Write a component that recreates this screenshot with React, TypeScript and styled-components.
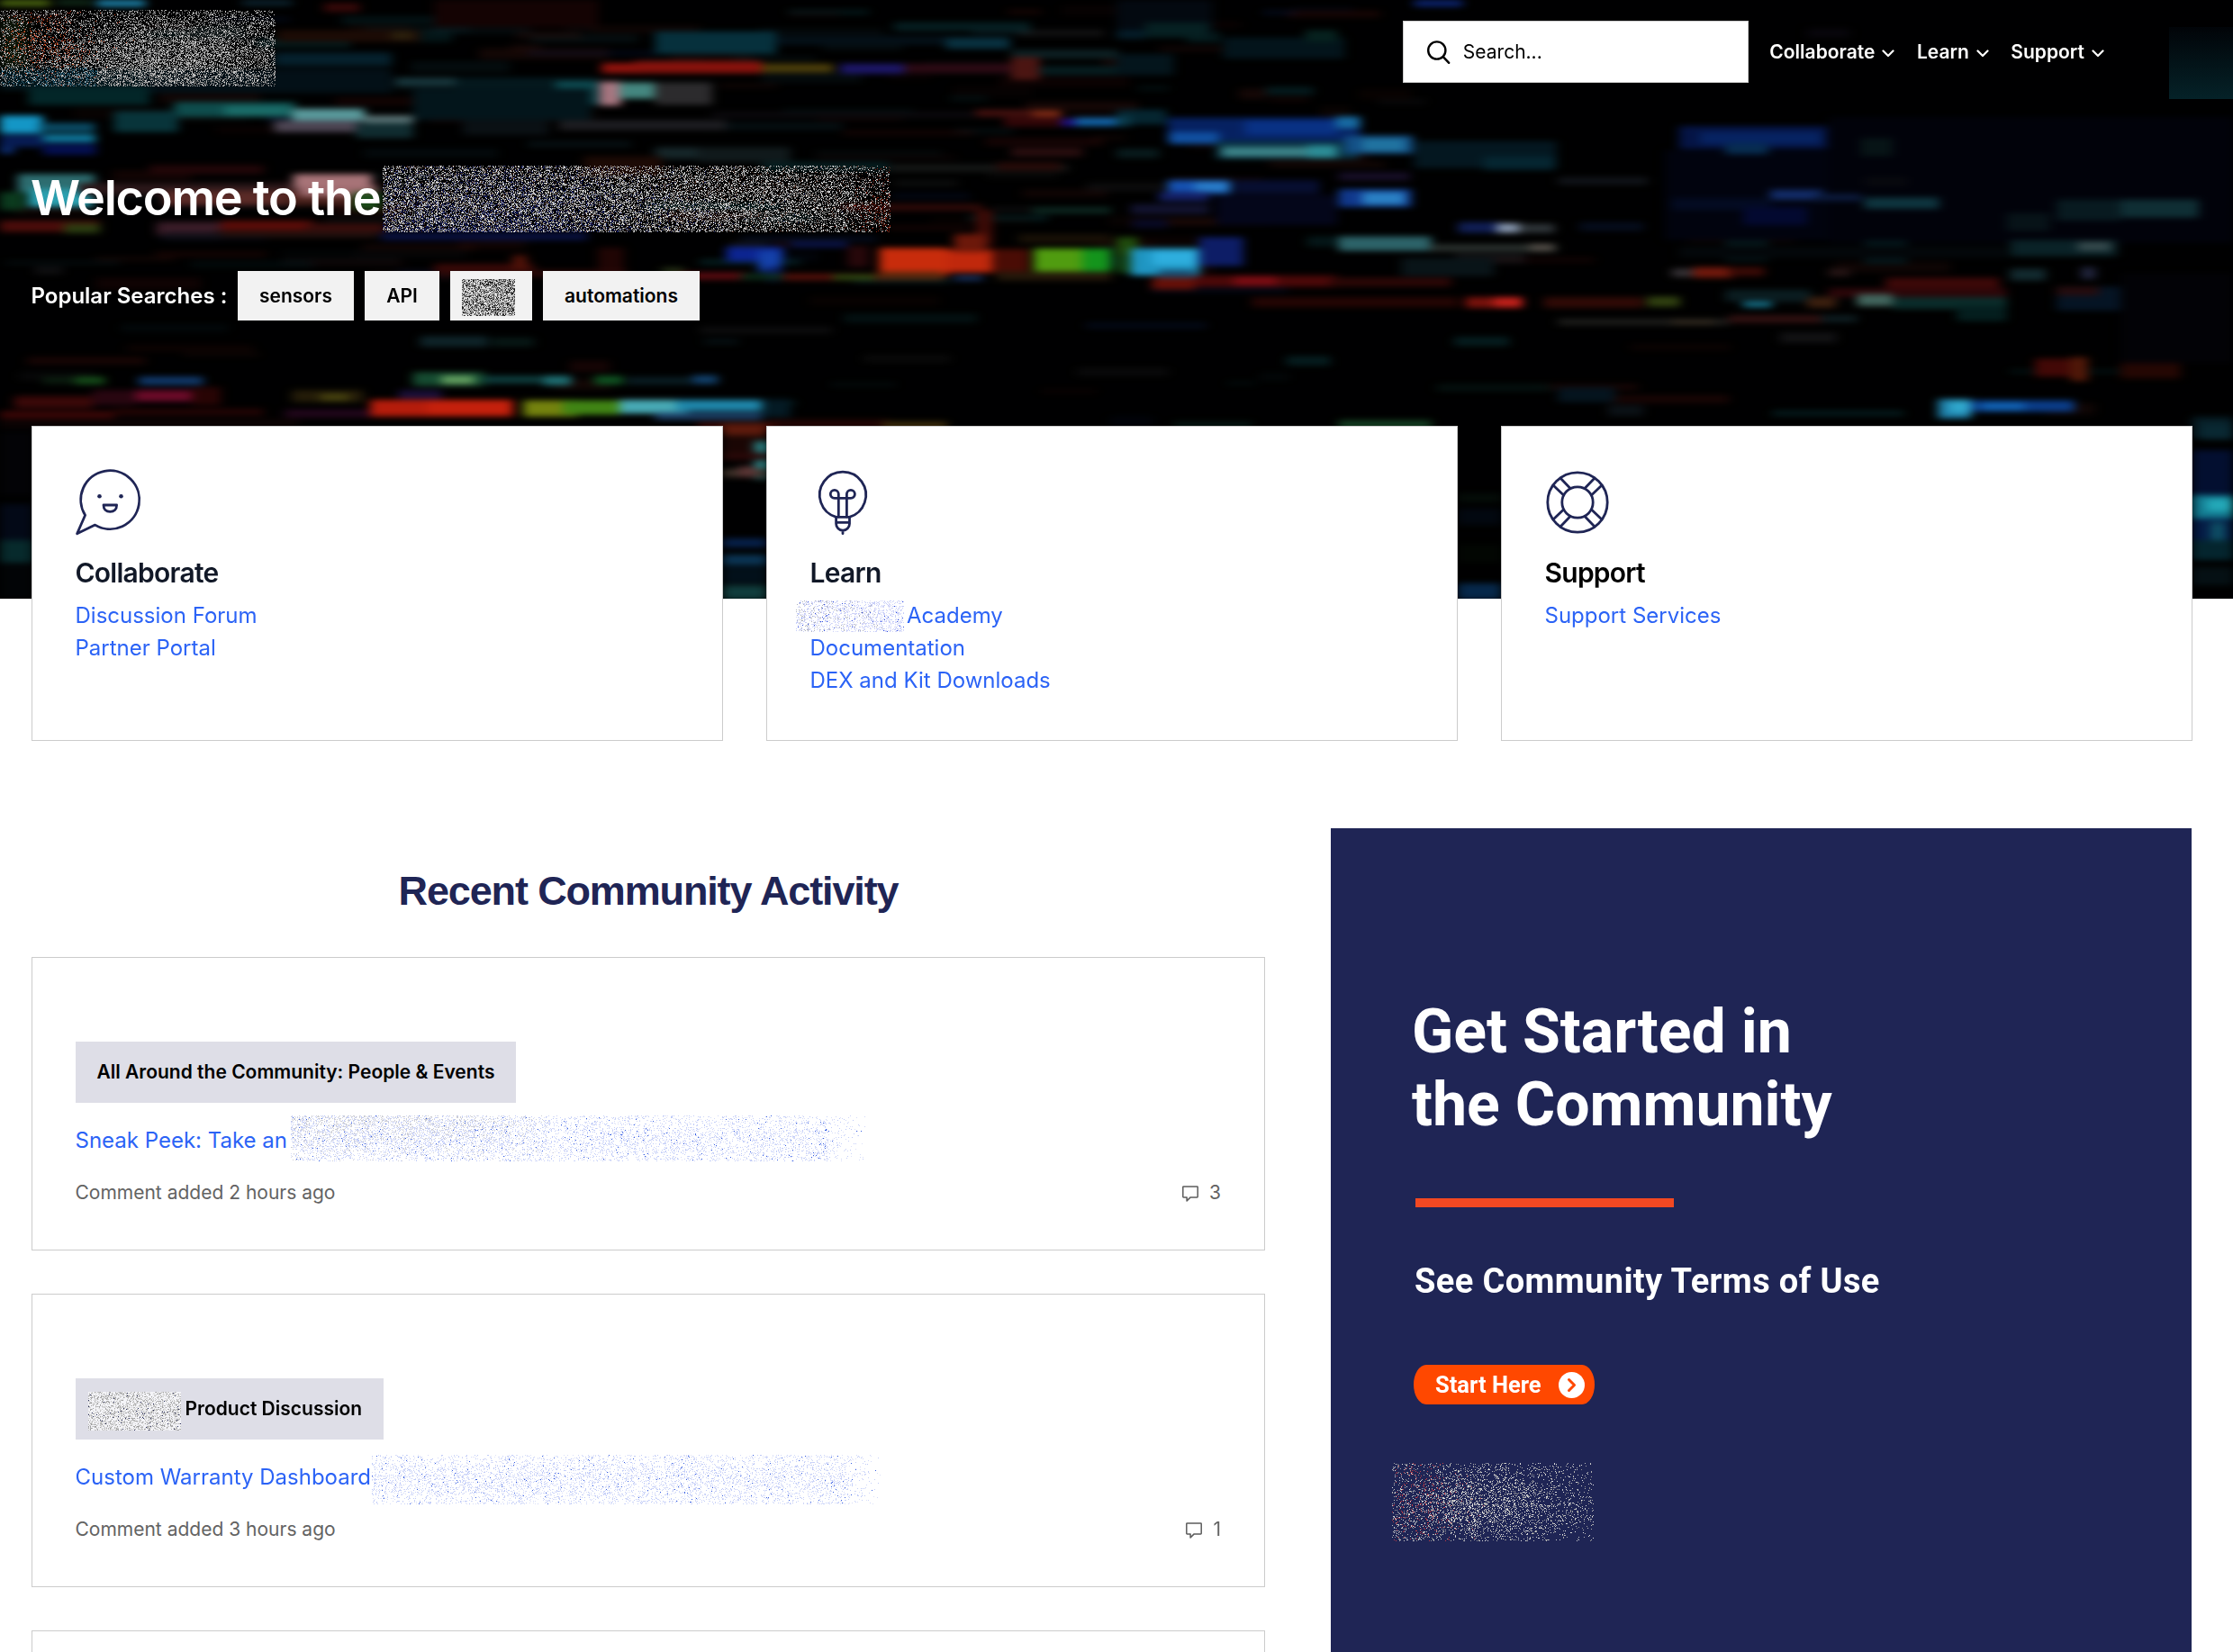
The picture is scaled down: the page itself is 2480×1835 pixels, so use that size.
import React, { useLayoutEffect, useRef } from "react";
import styled, { createGlobalStyle } from "styled-components";

const NAVY = "#1f2555";
const LINK = "#2b63f6";

const GlobalStyle = createGlobalStyle`
  * { box-sizing: border-box; }
  body {
    margin: 0;
    background: #fff;
    font-family: Inter, "Liberation Sans", sans-serif;
    color: #000;
  }
  h1, h2, h3, p { margin: 0; }
  a { color: inherit; text-decoration: none; }
`;

/* ---------- grain patches ---------- */

type Rgb = [number, number, number];
type GrainKind = "logo" | "heading" | "dense" | "link" | "fade" | "tag" | "promo";

const mulberry = (seed: number) => () => {
  seed = (seed + 0x6d2b79f5) | 0;
  let t = Math.imul(seed ^ (seed >>> 15), 1 | seed);
  t = (t + Math.imul(t ^ (t >>> 7), 61 | t)) ^ t;
  return ((t ^ (t >>> 14)) >>> 0) / 4294967296;
};

const bump = (v: number, mid: number, spread: number) =>
  Math.exp(-((v - mid) ** 2) / (2 * spread * spread));

function speck(kind: GrainKind, u: number, v: number, r: () => number): Rgb | null {
  const p = r();
  const k = r();
  const g = (lo: number, hi: number): Rgb => {
    const c = lo + (hi - lo) * k;
    return [c, c, c];
  };
  switch (kind) {
    case "logo": {
      const d = 0.2 + 0.38 * bump(u, 0.58, 0.28) * bump(v, 0.62, 0.32) + 0.06 * v;
      if (p > d) return null;
      if (r() < 0.4 * bump(u, 0.15, 0.1) * bump(v, 0.4, 0.22)) return [200, 60 + 30 * k, 40];
      if (u < 0.35 && v > 0.75 && r() < 0.4) return [40, 95, 120];
      return g(80, 220);
    }
    case "heading": {
      const d = 0.27 + 0.13 * bump(v, 0.55, 0.3) - 0.2 * bump(u, 1, 0.07);
      if (p > d) {
        const q = r();
        if (q < 0.35 * bump(u, 0.2, 0.2) * (0.3 + v)) return [18, 26, 90];
        if (q < 0.12 * bump(u, 1, 0.04) * (v + 0.2)) return [130, 28, 12];
        return q > 0.93 ? [70, 40, 30] : null;
      }
      return g(110, 240);
    }
    case "dense":
      return p < 0.42 ? g(10, 110) : g(170, 242);
    case "link":
      if (p > 0.28) return null;
      if (k > 0.95) return [50, 80, 225];
      return r() < 0.35 - 0.4 * u ? [175, 178, 190] : [190 + 30 * k, 200 + 20 * k, 248];
    case "fade": {
      const d = (0.13 + 0.1 * bump(v, 0.5, 0.25)) * (u > 0.93 ? (1 - u) * 9 : 1);
      if (p > d) return null;
      if (k > 0.96) return [55, 95, 225];
      return [185 + 40 * k, 198 + 30 * k, 248];
    }
    case "tag":
      if (p > 0.45) return [244, 244, 248];
      return k > 0.97 ? [40, 45, 90] : g(150, 240);
    case "promo": {
      const d = 0.07 + 0.24 * bump(u, 0.42, 0.26) * bump(v, 0.52, 0.25) + 0.05 * (1 - u);
      if (p > d) return null;
      if (r() < 0.3 * bump(u, 0.12, 0.12)) return [190, 60, 70];
      return g(140, 235);
    }
  }
}

const GrainCanvas = styled.canvas<{ $m?: string }>`
  display: block;
  flex: none;
  align-self: flex-start;
  margin: ${(p) => p.$m ?? "0"};
`;

function Grain({ kind, w, h, m, seed = 7, shade = 0 }: {
  kind: GrainKind; w: number; h: number; m?: string; seed?: number; shade?: number;
}) {
  const ref = useRef<HTMLCanvasElement>(null);
  useLayoutEffect(() => {
    const ctx = ref.current?.getContext("2d");
    if (!ctx) return;
    const img = ctx.createImageData(w, h);
    const r = mulberry(seed);
    for (let y = 0; y < h; y++) {
      for (let x = 0; x < w; x++) {
        const u = x / w;
        const v = y / h;
        let c = speck(kind, u, v, r);
        // grey haze from the tag sitting above the upper left part
        if (!c && shade && r() < shade * (1 - v * 0.9) * (u < 0.3 ? 1 : Math.max(0, 1 - (u - 0.3) * 6))) {
          c = [205, 206, 214];
        }
        if (!c) continue;
        const i = (y * w + x) * 4;
        img.data[i] = c[0];
        img.data[i + 1] = c[1];
        img.data[i + 2] = c[2];
        img.data[i + 3] = 255;
      }
    }
    ctx.putImageData(img, 0, 0);
  }, [kind, w, h, seed, shade]);
  return <GrainCanvas ref={ref} width={w} height={h} $m={m} aria-hidden />;
}

/* ---------- hero artwork ---------- */

type Streak = [number, number, number, number, string, number?];

// Left half, on a 1568 x 1440 grid covering 1240 x 480.
const LEFT: Streak[] = [
  [0, 0, 70, 20, "#4d6a10"], [80, 0, 50, 16, "#12301c"], [136, 0, 68, 22, "#1c80a8"], [340, 0, 70, 18, "#0b2430"],
  [455, 10, 50, 30, "#350808"], [610, 0, 230, 90, "#140303"], [390, 100, 200, 40, "#1c0b05"], [550, 105, 30, 28, "#2b200c"],
  [0, 60, 40, 180, "#0d1508"], [0, 230, 380, 70, "#04161c"], [385, 175, 165, 45, "#05202c"], [200, 230, 350, 80, "#031017"],
  [920, 105, 170, 75, "#06303c"], [1090, 120, 240, 30, "#041018"], [1328, 125, 90, 38, "#08303f"], [1420, 165, 150, 30, "#0c1f22"],
  [845, 210, 60, 34, "#8e120c"], [890, 204, 180, 40, "#87120c"], [1070, 212, 100, 30, "#4b3d0a"], [1180, 212, 90, 34, "#1c1666"],
  [1270, 212, 150, 32, "#2c0a14"], [1420, 190, 40, 76, "#4b1512"], [1460, 220, 108, 30, "#061d20"],
  [555, 258, 90, 30, "#16343a"], [640, 258, 200, 40, "#04181d"], [780, 270, 60, 80, "#0d4a50"], [842, 272, 30, 80, "#a87680"],
  [870, 275, 50, 54, "#44867f"], [920, 275, 80, 74, "#2c2b2d"], [580, 295, 250, 105, "#03151b"],
  [40, 290, 170, 60, "#032628"], [245, 340, 170, 50, "#0e4c4c"], [315, 352, 90, 34, "#1a6c68"], [410, 362, 102, 40, "#58989a"],
  [510, 385, 70, 26, "#597274"], [385, 402, 120, 38, "#4c4452"], [500, 410, 80, 50, "#102c30"], [160, 370, 90, 70, "#08343a"],
  [0, 385, 60, 60, "#1496c6"], [55, 410, 78, 30, "#0a4c66"], [60, 448, 74, 26, "#0f7aa0"], [0, 450, 60, 40, "#071c54"],
  [60, 480, 75, 36, "#040f50"], [0, 490, 20, 22, "#0c2c70"], [785, 400, 235, 34, "#1c1c20"], [650, 400, 120, 50, "#0a1014"],
  [1370, 365, 120, 24, "#43100e"], [1450, 368, 40, 22, "#7b2a14"], [1410, 390, 80, 32, "#320608"], [1490, 396, 30, 24, "#201088"],
  [1510, 392, 60, 28, "#1162a6"], [1000, 372, 370, 20, "#0b090d"], [920, 490, 60, 40, "#152528"], [980, 490, 130, 50, "#10191b"],
  [1420, 492, 100, 30, "#280d0e"], [1250, 548, 250, 24, "#151716"], [1400, 540, 90, 28, "#260a08"],
  [25, 580, 108, 60, "#2d6d70"], [40, 630, 90, 60, "#2aa0b0"], [0, 640, 35, 60, "#0b3a1e"], [110, 610, 300, 40, "#2a1719"],
  [230, 635, 190, 50, "#5a2a26"], [412, 580, 110, 50, "#a87478"], [420, 620, 110, 46, "#a06c70"], [395, 655, 140, 30, "#48201a"],
  [210, 550, 160, 30, "#220608"], [495, 640, 40, 60, "#1a4a18"], [0, 735, 140, 38, "#4a0c0a"], [90, 745, 50, 32, "#2b3c10"],
  [220, 740, 90, 44, "#3a1c28"], [310, 735, 130, 34, "#5a0c08"], [430, 745, 110, 30, "#3a0d0b"], [300, 770, 230, 22, "#22100d"],
  [230, 775, 80, 22, "#121018"], [535, 775, 290, 26, "#08103f"], [820, 520, 110, 70, "#1c0a05"],
  [1180, 680, 200, 22, "#300a08"], [1370, 700, 24, 120, "#3c0a06"], [1450, 690, 110, 22, "#0c2720"], [1255, 600, 90, 20, "#0c0d0d"],
  [1020, 822, 80, 50, "#0c2490"], [1065, 835, 32, 70, "#1441aa"], [1110, 805, 80, 20, "#091348"], [1075, 890, 22, 46, "#0a1c60"],
  [1190, 820, 30, 70, "#27070a"], [840, 825, 36, 100, "#200504"], [610, 880, 140, 30, "#3c0907"], [720, 850, 20, 60, "#501208"],
  [610, 900, 270, 22, "#2a0807"], [950, 908, 100, 24, "#5a0b10"], [930, 892, 30, 20, "#263216"], [1040, 912, 80, 20, "#0b2c18"],
  [1100, 912, 140, 22, "#54100a"], [1170, 915, 60, 18, "#2b4a10"],
  [1235, 826, 96, 94, "#c82c0c"], [1330, 832, 64, 76, "#c0280c"], [1340, 780, 45, 60, "#6c180a"], [1395, 830, 50, 80, "#4a0c05"],
  [1235, 905, 90, 28, "#58270c"], [1340, 918, 40, 18, "#162e5a"], [1452, 828, 72, 86, "#509c10"], [1520, 828, 40, 78, "#14941c"],
  [1400, 905, 160, 30, "#24180a"], [1430, 780, 130, 30, "#181006"],
  [590, 1120, 95, 36, "#0e2328"], [690, 1125, 60, 30, "#071715"], [170, 1080, 150, 26, "#02080a"],
  [105, 1255, 42, 26, "#144a18"], [60, 1255, 45, 24, "#0a1c0e"], [195, 1255, 90, 28, "#10386a"], [580, 1240, 100, 46, "#154a30"],
  [620, 1252, 46, 28, "#629e5e"], [680, 1252, 80, 26, "#0d3c3c"], [762, 1252, 40, 32, "#1d6c70"], [835, 1252, 40, 30, "#0e5020"],
  [880, 1256, 90, 26, "#091c22"], [972, 1250, 36, 30, "#103e68"],
  [20, 1320, 110, 40, "#3a0808"], [190, 1300, 80, 38, "#6a0a28"], [130, 1300, 60, 50, "#280610"], [270, 1290, 40, 60, "#280404"],
  [0, 1370, 160, 24, "#3c0606"], [160, 1362, 210, 22, "#250404"], [410, 1300, 100, 40, "#241c08"], [450, 1312, 40, 24, "#46420e"],
  [560, 1300, 60, 30, "#1a0f38"], [400, 1365, 120, 26, "#22061c"],
  [520, 1332, 200, 56, "#b41c0b"], [600, 1332, 120, 50, "#c4200c"], [735, 1334, 76, 54, "#74820e"], [790, 1334, 80, 48, "#408414"],
  [870, 1332, 96, 46, "#47a9b4"], [950, 1332, 120, 38, "#1e86aa"], [920, 1375, 150, 24, "#1b3d64"], [1070, 1330, 40, 60, "#041a24"],
  [0, 1395, 420, 30, "#0c0303"], [1080, 1398, 170, 30, "#220503"], [1240, 1405, 90, 26, "#3a2a0a"], [980, 1408, 110, 22, "#3a0804"],
];

// Right half, on the same kind of grid.
const RIGHT: Streak[] = [
  [418, 0, 68, 22, "#0b236e"], [0, 0, 135, 120, "#030910"], [40, 75, 90, 50, "#062022"], [0, 100, 40, 30, "#041c28"],
  [150, 125, 170, 70, "#03141b"], [265, 100, 45, 40, "#06211e"], [0, 180, 80, 70, "#04151c"],
  [970, 95, 60, 30, "#08060c"],
  [0, 365, 70, 50, "#052530"], [0, 385, 20, 36, "#0a3a4a"], [72, 392, 270, 80, "#062161"], [180, 400, 130, 50, "#093184"],
  [308, 388, 34, 40, "#176aa2"], [74, 440, 70, 40, "#104fa0"], [140, 470, 200, 60, "#08303f"], [148, 490, 120, 32, "#3c8388"],
  [268, 484, 42, 42, "#2c8c96"], [320, 452, 96, 60, "#134f86"], [345, 462, 60, 42, "#2073a0"], [418, 470, 200, 90, "#041720"],
  [515, 520, 100, 46, "#052530"], [0, 495, 60, 32, "#081a1c"],
  [72, 600, 88, 46, "#1551b0"], [110, 606, 48, 32, "#287cc8"], [60, 640, 70, 30, "#141f64"], [165, 600, 120, 46, "#070e30"],
  [312, 574, 100, 28, "#160e26"], [312, 630, 102, 60, "#10388c"], [345, 640, 60, 42, "#2a80c4"], [20, 680, 110, 34, "#11122e"],
  [140, 650, 170, 100, "#04061a"], [22, 730, 50, 30, "#080924"],
  [1000, 390, 570, 420, "#01020a"], [770, 500, 230, 300, "#01030e"],
  [620, 590, 126, 26, "#101318"], [790, 420, 208, 76, "#051445"], [820, 440, 170, 40, "#062362"], [855, 478, 60, 36, "#072c50"],
  [1045, 460, 45, 60, "#071416"],
  [918, 632, 74, 34, "#122b66"], [980, 646, 66, 24, "#0b1a3c"], [1050, 658, 105, 38, "#0e343e"], [780, 660, 140, 40, "#030b22"],
  [880, 690, 90, 60, "#030930"], [1050, 590, 60, 30, "#08090e"],
  [1410, 665, 110, 60, "#0f2e34"], [1320, 665, 90, 70, "#081a20"], [1250, 710, 60, 60, "#071318"],
  [480, 740, 60, 36, "#101e54"], [534, 744, 34, 32, "#8494ac"], [565, 746, 50, 30, "#2e3438"], [650, 740, 90, 30, "#050c1c"],
  [0, 790, 30, 60, "#1f4a0c"], [0, 850, 20, 60, "#124012"], [20, 828, 96, 90, "#1f95c2"], [50, 834, 62, 50, "#2eaede"],
  [116, 790, 62, 96, "#0d1d66"], [60, 900, 50, 36, "#1a4a6c"],
  [312, 788, 130, 48, "#2c6268"], [440, 814, 178, 24, "#29302d"], [580, 812, 34, 26, "#514c46"], [400, 860, 130, 60, "#091418"],
  [855, 800, 60, 70, "#05171a"], [1050, 800, 60, 80, "#04161a"], [1255, 800, 150, 54, "#0a2227"], [1350, 806, 46, 30, "#35494c"],
  [790, 820, 460, 40, "#03070a"],
  [50, 925, 60, 40, "#661008"], [110, 918, 200, 38, "#4c0808"], [165, 920, 60, 32, "#7a0c12"], [300, 925, 170, 30, "#2c0706"],
  [190, 990, 290, 34, "#240503"], [490, 990, 80, 36, "#78120c"], [530, 990, 40, 34, "#c0201a"], [600, 990, 140, 36, "#300a06"],
  [745, 988, 46, 34, "#304010"], [880, 984, 40, 40, "#157088"], [855, 965, 120, 40, "#0a1c20"], [780, 895, 30, 28, "#343034"],
  [810, 890, 56, 36, "#70180c"], [860, 890, 50, 30, "#3a0a06"], [1000, 895, 30, 26, "#251414"], [1000, 960, 250, 30, "#2c0609"],
  [1080, 925, 160, 36, "#3c0808"], [1040, 980, 50, 40, "#41645c"], [1090, 990, 160, 40, "#0a2c2a"], [970, 990, 40, 36, "#3a1e0e"],
  [1180, 1020, 70, 50, "#041e1e"], [1255, 895, 50, 40, "#12292e"], [1320, 955, 90, 80, "#051424"], [1320, 955, 60, 30, "#260c0e"],
  [1355, 890, 20, 40, "#20243c"],
  [620, 1062, 240, 22, "#1c1c1a"], [780, 1064, 60, 18, "#30281e"], [860, 1050, 130, 26, "#301010"], [990, 1050, 50, 24, "#0d1c20"],
  [1290, 1195, 70, 60, "#420806"], [1340, 1190, 24, 80, "#501808"], [1410, 1195, 84, 66, "#240703"],
  [450, 1280, 160, 24, "#04100e"], [620, 1290, 80, 50, "#05141e"], [690, 1350, 50, 36, "#0b1116"],
  [1154, 1330, 46, 64, "#1f80aa"], [1170, 1336, 30, 40, "#30a8cc"], [1200, 1334, 145, 38, "#0a3c88"], [1215, 1340, 60, 28, "#1060b0"],
  [312, 1400, 130, 30, "#123c20"], [80, 1404, 110, 26, "#041410"], [1530, 1400, 38, 50, "#082430"], [1410, 910, 158, 300, "#020206"],
];

// Slivers left visible between the cards, in hero pixels.
const LOWER: Streak[] = [
  [0, 480, 36, 70, "#030306"], [0, 560, 36, 40, "#030917"], [0, 600, 36, 28, "#072a2c"], [0, 625, 36, 40, "#020406"],
  [803, 470, 48, 14, "#5c1a0c"], [803, 485, 48, 20, "#1a0604"], [838, 490, 14, 42, "#2a8284"], [803, 503, 48, 8, "#2a0808"],
  [803, 521, 48, 9, "#3c3028"], [820, 518, 20, 12, "#5a3434"], [803, 598, 48, 10, "#06204a"], [803, 616, 48, 12, "#0a3352"],
  [803, 630, 48, 18, "#02101a"], [803, 650, 48, 16, "#103c3c"],
  [1619, 548, 48, 10, "#040c08"], [1619, 565, 48, 18, "#020810"], [1619, 605, 48, 20, "#020602"], [1619, 648, 48, 18, "#06284a"],
  [2435, 463, 45, 24, "#061c24"], [2445, 470, 35, 18, "#092832"], [2435, 500, 45, 110, "#030f30"], [2435, 550, 45, 26, "#12788e"],
  [2450, 554, 30, 14, "#23a8b8"], [2435, 576, 45, 26, "#041a44"], [2455, 580, 16, 22, "#0e5066"], [2435, 600, 45, 22, "#04252e"],
  [2435, 630, 45, 20, "#051014"],
];

// Faint bands that fill the dark space of the upper left and middle.
const HAZE: Streak[] = (() => {
  const r = mulberry(97);
  const tints = ["#0c4a50", "#3a0c0a", "#0a1c4a", "#123038", "#2a2a2e", "#3a1410"];
  return Array.from({ length: 190 }, (): Streak => {
    const upper = r() < 0.7;
    const x = r() * (upper ? 1560 : 2420);
    const y = upper ? r() * 300 : 240 + r() * 230;
    return [x, y, 30 + r() * 130, 4 + r() * 9, tints[Math.floor(r() * tints.length)], 0.1 + r() * 0.32];
  });
})();

const ArtSvg = styled.svg`
  position: absolute;
  inset: 0;
  width: 2480px;
  height: 665px;
  display: block;
`;

const Streaks = ({ items }: { items: Streak[] }) => (
  <>
    {items.map(([x, y, w, h, fill, opacity], i) => (
      <rect key={i} x={x} y={y} width={w} height={h} fill={fill} opacity={opacity} />
    ))}
  </>
);

const HeroArt = () => (
  <ArtSvg viewBox="0 0 2480 665" aria-hidden>
    <defs>
      <filter id="soft" x="0" y="0" width="2480" height="665" filterUnits="userSpaceOnUse" colorInterpolationFilters="sRGB">
        <feGaussianBlur stdDeviation="6 3" />
      </filter>
      <linearGradient id="edge" x1="0" y1="0" x2="0" y2="1">
        <stop offset="0" stopColor="#010408" />
        <stop offset="1" stopColor="#052228" />
      </linearGradient>
    </defs>
    <rect width="2480" height="665" fill="#000001" />
    <g filter="url(#soft)">
      <Streaks items={HAZE} />
      <g transform="scale(0.7908 0.33333)"><Streaks items={LEFT} /></g>
      <g transform="translate(1240 0) scale(0.7908 0.33333)"><Streaks items={RIGHT} /></g>
      <Streaks items={LOWER} />
    </g>
    <rect x="2409" y="30" width="71" height="80" fill="url(#edge)" />
  </ArtSvg>
);

/* ---------- icons ---------- */

const CardIcon = styled.svg`
  display: block;
  width: 72px;
  height: 72px;
  fill: none;
  stroke: ${NAVY};
  stroke-width: 2.8;
  stroke-linecap: round;
  stroke-linejoin: round;
  overflow: visible;
`;

const SmileyIcon = () => (
  <CardIcon viewBox="0 0 72 72">
    <path d="M10.600 50.300A32.500 32.500 0 1 1 21.600 61.100L1.600 70.700Z" />
    <circle cx="26.500" cy="29.200" r="2.300" fill={NAVY} stroke="none" />
    <circle cx="50.500" cy="29.200" r="2.300" fill={NAVY} stroke="none" />
    <path d="M31 39h14.600c0 4.700-2.900 7.300-7.300 7.300S31 43.700 31 39z" />
  </CardIcon>
);

const BulbIcon = () => (
  <CardIcon viewBox="0 0 72 72">
    <path d="M28.700 52.400A25.700 25.700 0 1 1 43.300 52.400" />
    <path d="M31.300 52V26.800a4.500 4.500 0 0 0-9 0c0 2.600 1.900 4.500 4.500 4.500h18.100c2.600 0 4.500-1.900 4.500-4.500a4.500 4.500 0 0 0-9 0V52" />
    <path d="M28.600 52.400h14.900v7.400a7.450 7.450 0 0 1-14.900 0zM28.600 58.300h14.900M36 67.500v3.200" />
  </CardIcon>
);

const BuoyIcon = () => (
  <CardIcon viewBox="0 0 72 72">
    <circle cx="36" cy="36" r="33.200" />
    <circle cx="36" cy="36" r="17.200" />
    {[0, 90, 180, 270].map((a) => (
      <path key={a} transform={`rotate(${a} 36 36)`} d="M17 9 28 20.500M9 17 20.500 28" />
    ))}
  </CardIcon>
);

const LensSvg = styled.svg`
  width: 28px;
  height: 28px;
  fill: none;
  stroke: #000;
  stroke-width: 2.400;
  stroke-linecap: round;
`;

const ChevronSvg = styled.svg`
  width: 14px;
  height: 9px;
  margin: 3px 0 0 8px;
  fill: none;
  stroke: currentColor;
  stroke-width: 2.200;
  stroke-linecap: round;
  stroke-linejoin: round;
`;

const BubbleSvg = styled.svg`
  width: 18px;
  height: 18px;
  margin-top: 2px;
  fill: none;
  stroke: #5c5c5c;
  stroke-width: 1.500;
  stroke-linejoin: round;
`;

/* ---------- page frame ---------- */

const Page = styled.div`
  width: 2480px;
  height: 1835px;
  overflow: hidden;
  background: #fff;
`;

const Hero = styled.section`
  position: relative;
  height: 665px;
  background: #000;
`;

const HeroContent = styled.div`
  position: relative;
  display: flex;
  flex-direction: column;
`;

const Header = styled.header`
  display: flex;
  align-items: flex-start;
  height: 184px;
  padding-top: 11px;
`;

const HeaderTools = styled.div`
  display: flex;
  align-items: center;
  margin: 12px 143px 0 auto;
`;

const SearchBox = styled.div`
  display: flex;
  align-items: center;
  gap: 12.500px;
  width: 384px;
  height: 69px;
  margin-right: 23px;
  padding-left: 25px;
  border: 1px solid #ccc;
  background: #fff;
  font-size: 21px;
`;

const Nav = styled.nav`
  display: flex;
  gap: 24.500px;
  color: #fff;
  font-size: 21px;
  font-weight: 600;
`;

const NavItem = styled.a`
  display: flex;
  align-items: center;
`;

const WelcomeRow = styled.div`
  display: flex;
  height: 74px;
  padding-left: 34px;
`;

const Welcome = styled.h1`
  width: 391px;
  color: #fff;
  font-size: 54px;
  font-weight: 600;
  line-height: 72px;
  letter-spacing: -0.0235em;
  white-space: nowrap;
`;

const PopularRow = styled.div`
  display: flex;
  align-items: center;
  gap: 12px;
  margin: 43px 0 0 34.500px;
`;

const PopularLabel = styled.span`
  width: 217.500px;
  color: #fff;
  font-size: 24px;
  font-weight: 600;
  white-space: nowrap;
`;

const Chip = styled.a<{ $w: number }>`
  display: flex;
  justify-content: center;
  width: ${(p) => p.$w}px;
  height: 55px;
  background: #f2f2f2;
  font-size: 21px;
  font-weight: 600;
  line-height: 55px;
`;

/* ---------- feature cards ---------- */

const CardGrid = styled.section`
  position: relative;
  display: grid;
  grid-template-columns: repeat(3, 768px);
  gap: 48px;
  margin: -192px 0 0 35px;
`;

const Card = styled.article`
  height: 350px;
  padding: 48px 48px 48px 47.5px;
  border: 1px solid #ccc;
  background: #fff;
`;

const CardTitle = styled.h3<{ $ink?: string }>`
  margin: 24px 0 12px;
  color: ${(p) => p.$ink ?? "#111827"};
  font-size: 30px;
  font-weight: 600;
  line-height: 36px;
  letter-spacing: -0.025em;
`;

const LinkRow = styled.a`
  display: flex;
  height: 36px;
  color: ${LINK};
  font-size: 24px;
  line-height: 36px;
  white-space: nowrap;
`;

/* ---------- activity ---------- */

const Columns = styled.main`
  display: grid;
  grid-template-columns: 1370px 956px;
  gap: 73px;
  margin: 97px 0 0 35px;
`;

const ActivityTitle = styled.h2`
  margin: 43px 0 46px;
  color: ${NAVY};
  font-family: "Liberation Sans", Arial, sans-serif;
  font-size: 45px;
  font-weight: 700;
  line-height: 54px;
  letter-spacing: -0.0255em;
  text-align: center;
`;

const ActivityList = styled.div`
  display: flex;
  flex-direction: column;
  gap: 48px;
`;

const ActivityCard = styled.article`
  height: 326px;
  padding: 93px 48px 0 47.500px;
  border: 1px solid #ccc;
`;

const Tag = styled.span<{ $w: number }>`
  display: flex;
  width: ${(p) => p.$w}px;
  height: 68px;
  margin-bottom: 24px;
  padding-left: 24px;
  background: #dedee7;
  font-size: 21px;
  font-weight: 600;
  line-height: 68px;
  white-space: nowrap;
`;

const Meta = styled.div`
  display: flex;
  justify-content: space-between;
  margin-top: 24px;
  color: #636363;
  font-size: 21px;
  line-height: 32px;
`;

const Replies = styled.span`
  display: flex;
  align-items: center;
  gap: 12px;
`;

/* ---------- promo ---------- */

const Promo = styled.aside`
  height: 940px;
  padding: 186px 0 0 92px;
  background: ${NAVY};
  color: #fff;
  font-family: Roboto, sans-serif;
`;

const PromoTitle = styled.h2`
  margin-left: -2px;
  font-size: 68px;
  font-weight: 700;
  line-height: 81px;
`;

const PromoRule = styled.div`
  width: 287px;
  height: 10px;
  margin: 63px 0 60px 2px;
  background: #f24822;
`;

const PromoText = styled.p`
  margin-left: 1px;
  font-size: 38px;
  font-weight: 700;
  line-height: 44px;
  letter-spacing: 0.38px;
`;

const StartButton = styled.a`
  display: flex;
  align-items: center;
  width: 201px;
  height: 44px;
  margin: 71px 0 65px;
  padding: 0 11px 0 24px;
  justify-content: space-between;
  border-radius: 14px / 22px;
  background: #ff4800;
  font-size: 25.500px;
  font-weight: 700;
`;

const StartArrow = styled.svg`
  width: 29px;
  height: 29px;
`;

const Replied = ({ count }: { count: number }) => (
  <Replies>
    <BubbleSvg viewBox="0 0 18 18">
      <path d="M1.500.900h15q.700 0 .700.700v10.600q0 .700-.700.700H9.200l-4.100 4v-4H1.500q-.700 0-.700-.700V1.600q0-.700.700-.700z" />
    </BubbleSvg>
    {count}
  </Replies>
);

export default function App() {
  return (
    <Page>
      <GlobalStyle />
      <Hero>
        <HeroArt />
        <HeroContent>
          <Header>
            <Grain kind="logo" w={306} h={85} seed={3} />
            <HeaderTools>
              <SearchBox>
                <LensSvg viewBox="0 0 28 28">
                  <circle cx="11.800" cy="12" r="9.600" />
                  <path d="m18.800 19.200 6.400 6.600" />
                </LensSvg>
                Search...
              </SearchBox>
              <Nav>
                {["Collaborate", "Learn", "Support"].map((label) => (
                  <NavItem key={label} href="#">
                    {label}
                    <ChevronSvg viewBox="0 0 14 9"><path d="m1.500 1.500 5.500 5.500 5.500-5.500" /></ChevronSvg>
                  </NavItem>
                ))}
              </Nav>
            </HeaderTools>
          </Header>
          <WelcomeRow>
            <Welcome>Welcome to the</Welcome>
            <Grain kind="heading" w={564} h={74} seed={11} />
          </WelcomeRow>
          <PopularRow>
            <PopularLabel>Popular Searches :</PopularLabel>
            <Chip $w={129} href="#">sensors</Chip>
            <Chip $w={83} href="#">API</Chip>
            <Chip $w={91} href="#"><Grain kind="dense" w={59} h={41} m="9px 6px 0 0" seed={5} /></Chip>
            <Chip $w={174} href="#">automations</Chip>
          </PopularRow>
        </HeroContent>
      </Hero>

      <CardGrid>
        <Card>
          <SmileyIcon />
          <CardTitle>Collaborate</CardTitle>
          <LinkRow href="#">Discussion Forum</LinkRow>
          <LinkRow href="#">Partner Portal</LinkRow>
        </Card>
        <Card>
          <BulbIcon />
          <CardTitle>Learn</CardTitle>
          <LinkRow href="#">
            <Grain kind="link" w={120} h={35} m="1px 3px 0 -15.500px" seed={21} />
            Academy
          </LinkRow>
          <LinkRow href="#">Documentation</LinkRow>
          <LinkRow href="#">DEX and Kit Downloads</LinkRow>
        </Card>
        <Card>
          <BuoyIcon />
          <CardTitle $ink="#000">Support</CardTitle>
          <LinkRow href="#">Support Services</LinkRow>
        </Card>
      </CardGrid>

      <Columns>
        <section>
          <ActivityTitle>Recent Community Activity</ActivityTitle>
          <ActivityList>
            <ActivityCard>
              <Tag $w={489}>All Around the Community: People &amp; Events</Tag>
              <LinkRow href="#">
                Sneak Peek: Take an
                <Grain kind="fade" w={640} h={51} m="-10px 0 0 4px" seed={31} shade={0.24} />
              </LinkRow>
              <Meta>
                Comment added 2 hours ago
                <Replied count={3} />
              </Meta>
            </ActivityCard>
            <ActivityCard>
              <Tag $w={342}>
                <Grain kind="tag" w={103} h={43} m="15px 5px 0 -10px" seed={41} />
                Product Discussion
              </Tag>
              <LinkRow href="#">
                Custom Warranty Dashboard
                <Grain kind="fade" w={566} h={55} m="-7px 0 0 1px" seed={51} />
              </LinkRow>
              <Meta>
                Comment added 3 hours ago
                <Replied count={1} />
              </Meta>
            </ActivityCard>
            <ActivityCard />
          </ActivityList>
        </section>
        <Promo>
          <PromoTitle>Get Started in<br />the Community</PromoTitle>
          <PromoRule />
          <PromoText>See Community Terms of Use</PromoText>
          <StartButton href="#">
            Start Here
            <StartArrow viewBox="0 0 29 29">
              <circle cx="14.500" cy="14.500" r="14.500" fill="#fff" />
              <path d="m11.500 8.500 6 6-6 6" fill="none" stroke="#ff4800" strokeWidth="3" strokeLinecap="round" strokeLinejoin="round" />
            </StartArrow>
          </StartButton>
          <Grain kind="promo" w={224} h={87} m="0 0 0 -24px" seed={61} />
        </Promo>
      </Columns>
    </Page>
  );
}
